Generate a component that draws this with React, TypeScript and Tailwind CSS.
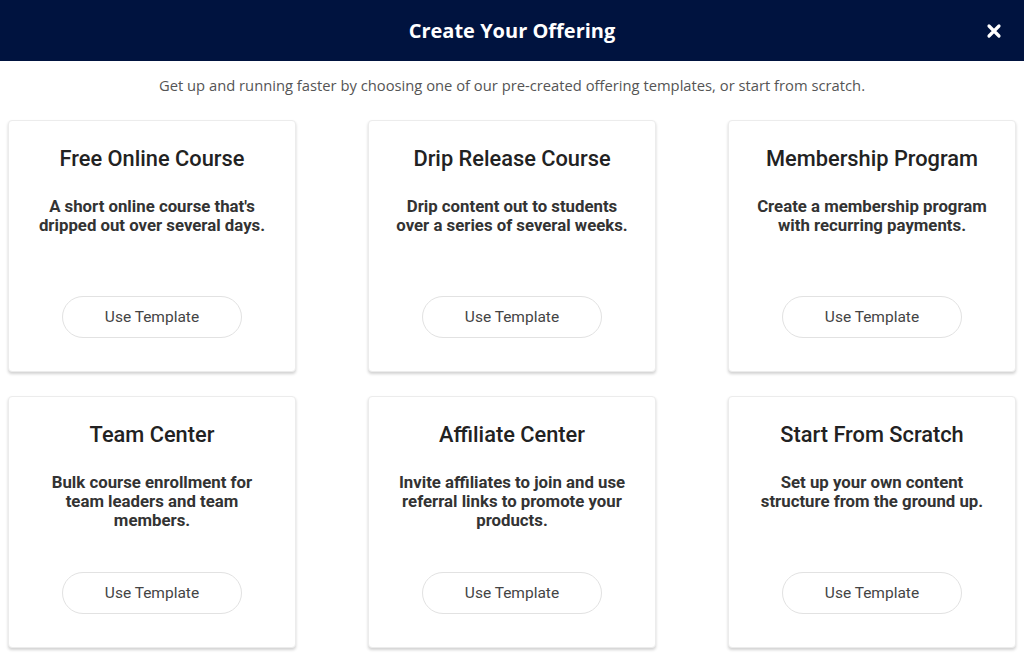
import React from 'react';

interface Template {
  title: string;
  description: string[];
}

const templates: Template[] = [
  { title: 'Free Online Course', description: ["A short online course that's", 'dripped out over several days.'] },
  { title: 'Drip Release Course', description: ['Drip content out to students', 'over a series of several weeks.'] },
  { title: 'Membership Program', description: ['Create a membership program', 'with recurring payments.'] },
  { title: 'Team Center', description: ['Bulk course enrollment for', 'team leaders and team', 'members.'] },
  { title: 'Affiliate Center', description: ['Invite affiliates to join and use', 'referral links to promote your', 'products.'] },
  { title: 'Start From Scratch', description: ['Set up your own content', 'structure from the ground up.'] },
];

const TemplateCard: React.FC<{ template: Template }> = ({ template }) => (
  <div className="flex h-[252px] flex-col items-center rounded-[4px] border border-[#ececec] bg-white px-3 pb-[33px] pt-[25px] shadow-[0_2px_3px_rgba(0,0,0,0.18)]">
    <h3 className="text-[21.8px] font-medium leading-[26px] text-[#222]">{template.title}</h3>
    <p className="mt-[25px] text-center text-[16.8px] font-bold leading-[19px] text-[#333]">
      {template.description.map((line, i) => (
        <span key={i} className="block">{line}</span>
      ))}
    </p>
    <button className="mt-auto h-[42px] w-[180px] rounded-full border border-[#e2e2e2] bg-white pt-[2px] text-[15.5px] text-[#444]">
      Use Template
    </button>
  </div>
);

export default function App() {
  return (
    <div className="h-[660px] w-[1024px] overflow-hidden bg-white font-['Roboto',sans-serif]">
      {/* Header */}
      <div className="relative flex h-[61px] items-center justify-center bg-[#00133f]">
        <h1 className="font-['Open_Sans',sans-serif] text-[20px] font-bold text-white">Create Your Offering</h1>
        <button className="absolute right-[22px] top-1/2 -translate-y-1/2 text-white">
          <svg width="16" height="16" viewBox="0 0 16 16">
            <path d="M3 3L13 13M13 3L3 13" stroke="white" strokeWidth="3.2" strokeLinecap="round" />
          </svg>
        </button>
      </div>

      <p className="mt-[14px] text-center font-['Open_Sans',sans-serif] text-[14.75px] leading-[20px] text-[#555]">
        Get up and running faster by choosing one of our pre-created offering templates, or start from scratch.
      </p>

      <div className="mt-[25px] grid grid-cols-3 gap-x-[72px] gap-y-[24px] px-2">
        {templates.map((t) => (
          <TemplateCard key={t.title} template={t} />
        ))}
      </div>
    </div>
  );
}
